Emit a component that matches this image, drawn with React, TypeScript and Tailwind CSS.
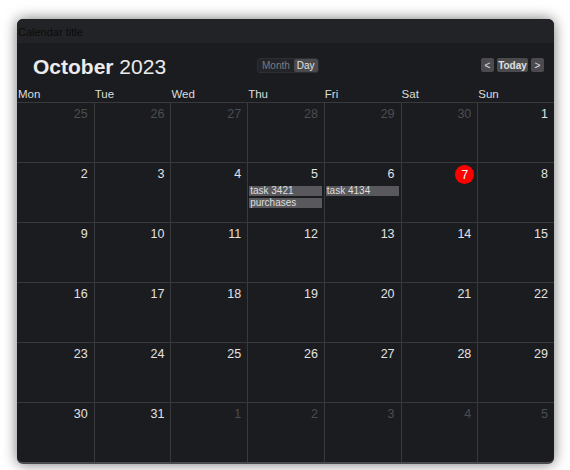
import React from 'react';

type Cell = { day: number; outside?: boolean; today?: boolean; events?: string[] };

const weeks: Cell[][] = [
  [
    { day: 25, outside: true },
    { day: 26, outside: true },
    { day: 27, outside: true },
    { day: 28, outside: true },
    { day: 29, outside: true },
    { day: 30, outside: true },
    { day: 1 },
  ],
  [
    { day: 2 },
    { day: 3 },
    { day: 4 },
    { day: 5, events: ['task 3421', 'purchases'] },
    { day: 6, events: ['task 4134'] },
    { day: 7, today: true },
    { day: 8 },
  ],
  [9, 10, 11, 12, 13, 14, 15].map(d => ({ day: d })),
  [16, 17, 18, 19, 20, 21, 22].map(d => ({ day: d })),
  [23, 24, 25, 26, 27, 28, 29].map(d => ({ day: d })),
  [
    { day: 30 },
    { day: 31 },
    { day: 1, outside: true },
    { day: 2, outside: true },
    { day: 3, outside: true },
    { day: 4, outside: true },
    { day: 5, outside: true },
  ],
];

const dayNames = ['Mon', 'Tue', 'Wed', 'Thu', 'Fri', 'Sat', 'Sun'];

export default function App() {
  return (
    <div className="w-[570px] h-[470px] bg-white overflow-hidden font-['Liberation_Sans','Noto_Sans',sans-serif]">
      <div className="ml-[17px] mt-[19px] w-[537px] h-[445px] rounded-[6px] overflow-hidden bg-[#1b1c1f] shadow-[0_0_14px_rgba(0,0,0,0.55)] border-b-[2px] border-[#4a4a4e] flex flex-col">
        {/* Title bar */}
        <div className="h-[24px] bg-[#222326] flex items-center pl-[1px] pt-[2px] text-[11px] text-[#0b0b0c]">
          Calendar title
        </div>

        {/* Toolbar */}
        <div className="h-[44px] flex items-center pl-[16px] pr-[10px]">
          <div className="w-[224px] text-[21px] leading-none text-[#ececec] pt-[3px]">
            <span className="font-bold">October</span> 2023
          </div>
          <div className="flex items-center h-[15px] rounded-[3px] bg-[#232427] border border-[#2e2f33] text-[10px]">
            <div className="px-[4px] text-[#7a7a7e]">Month</div>
            <div className="px-[3px] h-full flex items-center rounded-[2px] bg-[#4b4b4f] text-[#e0e0e0]">Day</div>
          </div>
          <div className="ml-auto flex items-center gap-[3px] text-[10px] text-[#e0e0e0]">
            <div className="w-[13px] h-[14px] rounded-[2px] bg-[#4b4b4f] flex items-center justify-center">&lt;</div>
            <div className="w-[31px] h-[14px] rounded-[2px] bg-[#4b4b4f] flex items-center justify-center font-bold">Today</div>
            <div className="w-[13px] h-[14px] rounded-[2px] bg-[#4b4b4f] flex items-center justify-center">&gt;</div>
          </div>
        </div>

        {/* Day names */}
        <div className="grid grid-cols-7 h-[15px] text-[11.5px] text-[#dcdcdc] leading-[15px]">
          {dayNames.map(n => (
            <div key={n} className="pl-[1px]">{n}</div>
          ))}
        </div>

        {/* Grid */}
        <div className="flex flex-col">
          {weeks.map((week, wi) => (
            <div key={wi} className="grid grid-cols-7 h-[60px] border-t border-[#38393d]">
              {week.map((c, ci) => (
                <div key={ci} className={`relative ${ci > 0 ? 'border-l border-[#38393d]' : ''}`}>
                  <div className="flex justify-end pt-[2px] pr-[3px] h-[20px]">
                    {c.today ? (
                      <div className="w-[19px] h-[19px] rounded-full bg-[#ff0000] text-white text-[12px] flex items-center justify-center">
                        {c.day}
                      </div>
                    ) : (
                      <div className={`pr-[3px] pt-[2px] text-[12.5px] leading-[14px] ${c.outside ? 'text-[#4c4d51]' : 'text-[#e2e2e2]'}`}>
                        {c.day}
                      </div>
                    )}
                  </div>
                  {c.events && (
                    <div className="mt-[3px] flex flex-col gap-[2px] pl-[1px] pr-[2px]">
                      {c.events.map(e => (
                        <div key={e} className="h-[10px] bg-[#59595d] text-[10px] leading-[10px] text-[#dedede] pl-[1px]">
                          {e}
                        </div>
                      ))}
                    </div>
                  )}
                </div>
              ))}
            </div>
          ))}
        </div>
      </div>
    </div>
  );
}
